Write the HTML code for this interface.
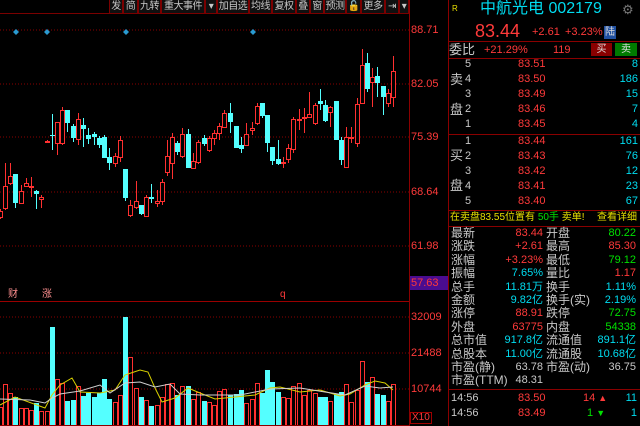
<!DOCTYPE html>
<html><head><meta charset="utf-8"><style>
*{margin:0;padding:0;box-sizing:border-box}
body{width:640px;height:426px;background:#000;overflow:hidden;position:relative;font-family:"Liberation Sans","Noto Sans CJK SC",sans-serif;font-size:11px;color:#c8c8c8}
.a{position:absolute;white-space:nowrap;line-height:1}
.r{color:#ff3a3a}.c{color:#00dcf0}.g{color:#00e000}.w{color:#c8c8c8}.y{color:#e8e000}
.tb{position:absolute;top:0;height:14px;border:1px solid #7a0000;border-top:none;background:#101010;color:#c8c8c8;font-size:10px;line-height:13px;text-align:center;white-space:nowrap;overflow:hidden;letter-spacing:-0.5px}
.hl{position:absolute;left:448px;width:192px;height:1px;background:#8a0000}
.num{font-family:"Liberation Sans",sans-serif}
</style></head><body>
<div class="tb" style="left:109px;width:14px">发</div>
<div class="tb" style="left:123px;width:15px">简</div>
<div class="tb" style="left:138px;width:23px">九转</div>
<div class="tb" style="left:161px;width:44px">重大事件</div>
<div class="tb" style="left:205px;width:12px">▾</div>
<div class="tb" style="left:217px;width:32px">加自选</div>
<div class="tb" style="left:249px;width:23px">均线</div>
<div class="tb" style="left:272px;width:24px">复权</div>
<div class="tb" style="left:296px;width:14px">叠</div>
<div class="tb" style="left:310px;width:14px">窗</div>
<div class="tb" style="left:324px;width:22px">预测</div>
<div class="tb" style="left:346px;width:15px">🔓</div>
<div class="tb" style="left:361px;width:24px">更多</div>
<div class="tb" style="left:385px;width:14px">⇥</div>
<div class="tb" style="left:399px;width:10px">▾</div>
<svg width="640" height="426" style="position:absolute;left:0;top:0">
<line x1="0" y1="13.5" x2="409" y2="13.5" stroke="#7a0000"/>
<line x1="409.5" y1="0" x2="409.5" y2="426" stroke="#8a0000"/>
<line x1="448.5" y1="0" x2="448.5" y2="426" stroke="#8a0000"/>
<g stroke="#8a0000" stroke-dasharray="1,2">
<line x1="0" y1="30" x2="409" y2="30"/><line x1="0" y1="84" x2="409" y2="84"/><line x1="0" y1="137" x2="409" y2="137"/><line x1="0" y1="192" x2="409" y2="192"/><line x1="0" y1="246" x2="409" y2="246"/>
<line x1="0" y1="317" x2="409" y2="317"/><line x1="0" y1="353" x2="409" y2="353"/><line x1="0" y1="389" x2="409" y2="389"/>
</g>
<line x1="0" y1="301.5" x2="409" y2="301.5" stroke="#9a0000"/>
<g fill="#2a9ad0"><path d="M16 29l3 3-3 3-3-3z"/><path d="M47 29l3 3-3 3-3-3z"/><path d="M126 29l3 3-3 3-3-3z"/><path d="M253 29l3 3-3 3-3-3z"/></g>
<g id="k"></g>
<g id="v"></g>
<polyline fill="none" stroke="#d8d000" stroke-width="1" points="0,405 15,397 45,408 52,395 60,385 72,378 80,392 100,393 115,390 125,375 140,370 148,372 155,388 162,402 175,398 188,388 200,393 215,399 235,397 255,395 270,388 280,387 300,392 320,390 340,396 350,394 365,385 375,381 385,383 393,390"/>
<polyline fill="none" stroke="#d0d0d0" stroke-width="1" points="0,399 30,400 45,403 52,398 60,394 80,391 100,385 110,393 125,383 140,382 155,387 170,384 180,394 200,395 240,395 270,389 300,388 325,392 345,395 365,386 380,388 393,387"/>
<rect x="410" y="276" width="38" height="14" fill="#4a0c90"/>
<line x1="0" y1="425.5" x2="409" y2="425.5" stroke="#8a0000"/>
</svg>
<script>
var K=[[0,211,217,209,219,'r'],[5,186,208,163,210,'r'],[10,176,183,163,185,'r'],[15,174,203,174,208,'c'],[21,191,203,185,204,'r'],[26,183,186,178,187,'r'],[31,186,187,177,197,'r'],[36,191,194,190,209,'c'],[41,197,199,195,208,'r'],[47,141,142,140,142,'r'],[52,135,136,114,150,'c'],[57,122,143,122,155,'r'],[62,110,143,107,145,'r'],[67,110,123,110,132,'c'],[73,126,138,124,142,'c'],[78,119,139,113,145,'r'],[83,125,129,118,147,'c'],[88,135,139,128,144,'c'],[94,134,137,132,145,'c'],[99,138,145,136,148,'c'],[104,137,158,135,158,'c'],[109,157,163,148,170,'c'],[115,156,163,153,167,'r'],[120,140,157,136,162,'r'],[125,169,198,169,201,'c'],[130,205,215,200,217,'r'],[136,201,207,181,209,'r'],[141,205,214,205,215,'c'],[146,197,216,195,217,'r'],[151,197,199,184,203,'c'],[157,201,203,190,207,'r'],[162,182,201,179,205,'r'],[167,156,172,140,176,'r'],[172,137,163,133,179,'r'],[177,143,152,141,155,'c'],[182,134,156,128,158,'r'],[188,134,168,129,168,'c'],[193,161,168,153,168,'r'],[198,142,162,140,164,'r'],[204,138,144,135,146,'c'],[209,138,150,136,152,'r'],[214,133,138,130,145,'r'],[219,126,133,123,140,'r'],[224,113,127,110,128,'r'],[230,113,122,103,133,'c'],[236,126,148,126,148,'c'],[241,145,149,137,153,'c'],[246,134,145,123,146,'r'],[252,128,130,122,135,'r'],[257,106,123,103,125,'r'],[262,103,116,103,118,'c'],[267,115,143,115,152,'c'],[272,147,161,147,165,'c'],[278,159,164,140,165,'c'],[283,162,163,157,168,'r'],[288,148,159,144,163,'r'],[293,119,149,117,153,'r'],[299,119,120,109,130,'r'],[304,117,118,108,133,'r'],[309,114,117,92,117,'r'],[315,105,123,103,125,'r'],[320,101,104,89,110,'c'],[325,105,121,100,122,'c'],[330,107,112,106,127,'r'],[336,101,140,101,140,'c'],[341,140,160,137,165,'c'],[346,137,167,127,168,'r'],[351,137,138,127,143,'r'],[357,104,143,98,147,'r'],[362,65,103,49,103,'r'],[367,63,89,53,92,'c'],[372,77,82,68,107,'r'],[377,76,83,67,97,'c'],[383,86,97,86,115,'c'],[388,93,103,89,107,'r'],[393,71,97,56,107,'r']];
var V=[407,384,393,397,408,408,410,403,411,411,327,379,383,401,400,386,396,393,397,393,379,399,402,395,317,357,388,397,400,406,405,397,384,383,395,386,386,399,392,401,402,405,391,389,395,394,390,403,399,383,393,370,382,392,397,398,386,383,395,390,393,397,397,401,394,392,384,402,390,361,382,377,394,395,401,384];
var R='#ff3030',C='#54ffff',s='',t='';
K.forEach(function(k,i){var col=k[5]=='r'?R:C;var x=k[0]+.5;
s+='<line x1="'+x+'" x2="'+x+'" y1="'+k[3]+'" y2="'+k[4]+'" stroke="'+col+'"/>';
var h=Math.max(1,k[2]-k[1]);
if(k[5]=='r')s+='<rect x="'+(k[0]-1.5)+'" y="'+(k[1]+.5)+'" width="4" height="'+h+'" fill="#000" stroke="'+R+'"/>';
else s+='<rect x="'+(k[0]-2)+'" y="'+k[1]+'" width="5" height="'+h+'" fill="'+C+'"/>';
var vt=V[i];
if(k[5]=='r')t+='<rect x="'+(k[0]-1.5)+'" y="'+(vt+.5)+'" width="4" height="'+(425-vt)+'" fill="#000" stroke="'+R+'"/>';
else t+='<rect x="'+(k[0]-2)+'" y="'+vt+'" width="5" height="'+(426-vt)+'" fill="'+C+'"/>';
});
document.getElementById('k').innerHTML=s;document.getElementById('v').innerHTML=t;
</script>
<div class="a r num" style="left:411px;top:25px">88.71</div>
<div class="a r num" style="left:411px;top:79px">82.05</div>
<div class="a r num" style="left:411px;top:132px">75.39</div>
<div class="a r num" style="left:411px;top:187px">68.64</div>
<div class="a r num" style="left:411px;top:241px">61.98</div>
<div class="a r num" style="left:411px;top:278px">57.63</div>
<div class="a r num" style="left:411px;top:312px">32009</div>
<div class="a r num" style="left:411px;top:348px">21488</div>
<div class="a r num" style="left:411px;top:384px">10744</div>
<div class="a r num" style="left:410px;top:412px;border:1px solid #a00000;padding:0 1px;font-size:10px">X10</div>
<div class="a" style="left:8px;top:290px;color:#ff9090;font-size:10px">财</div>
<div class="a" style="left:42px;top:290px;color:#ff9090;font-size:10px">涨</div>
<div class="a r" style="left:280px;top:290px;font-size:10px">q</div>
<div class="a y" style="left:452px;top:5px;font-size:8px">R</div>
<div class="a c" style="left:480px;top:1px;font-size:16px">中航光电 002179</div>
<div class="a" style="left:622px;top:3px;color:#777;font-size:13px">⚙</div>
<div class="a r num" style="left:475px;top:22px;font-size:18px">83.44</div>
<div class="a r num" style="left:532px;top:27px">+2.61</div>
<div class="a r num" style="left:565px;top:27px">+3.23%</div>
<div class="a" style="left:604px;top:26px;width:12px;height:13px;background:#2050a0;color:#ddd;font-size:10px;text-align:center;line-height:13px">陆</div>
<div class="hl" style="top:41px"></div>
<div class="a w" style="left:449px;top:43px;font-size:13px">委比</div>
<div class="a r num" style="left:484px;top:45px">+21.29%</div>
<div class="a r num" style="left:553px;top:45px">119</div>
<div class="a" style="left:591px;top:43px;width:21px;height:13px;background:#8a0000;color:#ddd;font-size:10px;text-align:center;line-height:13px">买</div>
<div class="a" style="left:615px;top:43px;width:22px;height:13px;background:#007a00;color:#ddd;font-size:10px;text-align:center;line-height:13px">卖</div>
<div class="hl" style="top:58px"></div>
<div class="a w" style="left:450px;top:73px;font-size:13px">卖</div>
<div class="a w" style="left:450px;top:103px;font-size:13px">盘</div>
<div class="hl" style="top:134px"></div>
<div class="a w" style="left:450px;top:149px;font-size:13px">买</div>
<div class="a w" style="left:450px;top:179px;font-size:13px">盘</div>
<div class="hl" style="top:210px"></div>
<div id="ob"></div>
<script>
var ob=[[5,'83.51',8],[4,'83.50',186],[3,'83.49',15],[2,'83.46',7],[1,'83.45',4],[1,'83.44',161],[2,'83.43',76],[3,'83.42',12],[4,'83.41',23],[5,'83.40',67]];
var h='';ob.forEach(function(o,i){var y=59+i*15.1+(i>=5?1:0);
h+='<div class="a w num" style="left:465px;top:'+y+'px">'+o[0]+'</div><div class="a r num" style="left:518px;top:'+y+'px">'+o[1]+'</div><div class="a c num" style="right:2px;top:'+y+'px">'+o[2]+'</div>';});
document.getElementById('ob').innerHTML=h;
</script>
<div class="a y" style="left:450px;top:213px;font-size:10px">在卖盘83.55位置有 <span class="g">50手</span> 卖单!</div>
<div class="a y" style="right:3px;top:213px;font-size:10px">查看详细</div>
<div class="hl" style="top:226px"></div>
<div id="st"></div>
<script>
var st=[['最新','83.44','r','开盘','80.22','g'],['涨跌','+2.61','r','最高','85.30','r'],['涨幅','+3.23%','r','最低','79.12','g'],['振幅','7.65%','c','量比','1.17','r'],['总手','11.81万','c','换手','1.11%','c'],['金额','9.82亿','c','换手(实)','2.19%','c'],['涨停','88.91','r','跌停','72.75','g'],['外盘','63775','r','内盘','54338','g'],['总市值','917.8亿','c','流通值','891.1亿','c'],['总股本','11.00亿','c','流通股','10.68亿','c'],['市盈(静)','63.78','w','市盈(动)','36.75','w'],['市盈(TTM)','48.31','w','','','w']];
var h='';st.forEach(function(s,i){var y=227+i*13.4;
h+='<div class="a w" style="left:451px;top:'+y+'px;font-size:12px">'+s[0]+'</div><div class="a '+s[2]+' num" style="right:97px;top:'+(y+1)+'px">'+s[1]+'</div><div class="a w" style="left:546px;top:'+y+'px;font-size:12px">'+s[3]+'</div><div class="a '+s[5]+' num" style="right:4px;top:'+(y+1)+'px">'+s[4]+'</div>';});
document.getElementById('st').innerHTML=h;
</script>
<div class="hl" style="top:389px"></div>
<div class="a w num" style="left:451px;top:393px">14:56</div>
<div class="a r num" style="left:518px;top:393px">83.50</div>
<div class="a r num" style="left:583px;top:393px">14 <span style="font-size:9px">▲</span></div>
<div class="a c num" style="right:3px;top:393px">11</div>
<div class="a w num" style="left:451px;top:408px">14:56</div>
<div class="a r num" style="left:518px;top:408px">83.49</div>
<div class="a g num" style="left:587px;top:408px">1 <span style="font-size:9px">▼</span></div>
<div class="a c num" style="right:3px;top:408px">1</div>
</body></html>
